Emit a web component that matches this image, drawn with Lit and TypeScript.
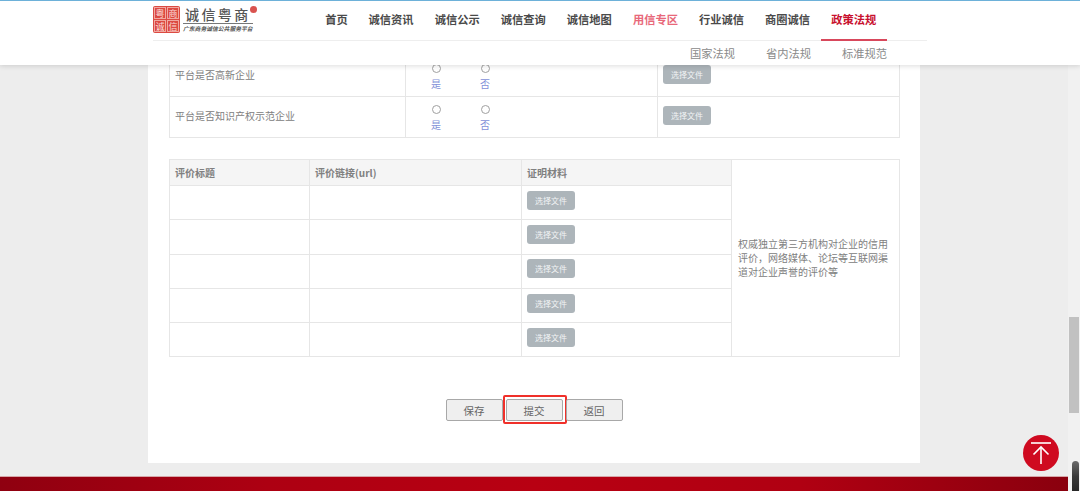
import { LitElement, html, css } from "lit";
import { customElement } from "lit/decorators.js";

const NAV = ["首页", "诚信资讯", "诚信公示", "诚信查询", "诚信地图", "用信专区", "行业诚信", "商圈诚信", "政策法规"];
const SUB = ["国家法规", "省内法规", "标准规范"];

@customElement("app-root")
export class AppRoot extends LitElement {
  static styles = css`
    :host {
      display: block;
      position: relative;
      width: 1080px;
      height: 491px;
      overflow: hidden;
      background: #ededed;
      font-family: "Noto Sans CJK SC", "Liberation Sans", sans-serif;
      color: #808080;
    }
    * { box-sizing: border-box; }
    .page { display: flex; height: 491px; }
    .scroll-area { width: 1068px; flex: none; }
    .sheet {
      width: 772px;
      height: 463px;
      margin-left: 148px;
      padding: 55px 20px 0 21px;
      background: #fff;
    }
    .gutter { width: 12px; flex: none; background: #f1f1f1; padding: 317px 1px 0; }
    .thumb { height: 96px; background: #c1c1c1; }
    .foot {
      height: 15px;
      margin-top: 13px;
      border-top: 1px solid #d6a6a8;
      background: linear-gradient(90deg, #8f0010 0%, #ad0012 25%, #b80012 50%, #b00012 75%, #8a000e 100%);
    }
    table { border-collapse: collapse; table-layout: fixed; width: 731px; font-size: 10px; }
    td, th { border: 1px solid #e6e6e6; padding: 0 5px; font-weight: 400; text-align: left; }
    .t1 tr { height: 41px; }
    .t1 td.label { padding-bottom: 3px; }
    .t2 { margin-top: 21px; }
    .t2 th { height: 26px; background: #f5f5f5; font-weight: 700; color: #808080; }
    .t2 td { height: 34.3px; }
    .t2 td.cell-file { padding-bottom: 5px; }
    .side { line-height: 14px; padding: 0 6px; font-size: 10px; background: #fff; }
    .file {
      display: flex;
      align-items: center;
      justify-content: center;
      width: 48px;
      height: 19px;
      border-radius: 3px;
      background: #adb5ba;
      color: #f2f4f5;
      font-size: 8px;
    }
    .f1 { margin-top: -3px; }
    .radios { display: flex; padding: 3px 0 0 25px; gap: 39px; margin-left: -5px; }
    .radio { display: flex; flex-direction: column; align-items: center; width: 10px; color: #7f90d8; font-size: 10px; line-height: 14px; }
    .dot { width: 9px; height: 9px; margin: 0 0 4px; border: 1px solid #a0a0a0; border-radius: 50%; background: #fff; }
    .actions { display: flex; gap: 3px; justify-content: center; padding-right: 1px; margin-top: 42px; }
    .act {
      position: relative;
      width: 57px;
      height: 22px;
      display: flex;
      align-items: center;
      justify-content: center;
      background: #efefef;
      border: 1px solid #a8a8a8;
      border-radius: 2px;
      color: #666;
      font-size: 10.5px;
    }
    .act.mark::after {
      content: "";
      position: absolute;
      inset: -5px -5px -4px -4px;
      border: 2px solid #f0302a;
      border-radius: 2px;
    }
    header {
      position: absolute;
      inset: 0 0 auto 0;
      height: 65px;
      background: #fff;
      border-top: 1px solid #6db1d9;
      box-shadow: 0 1px 5px rgba(0, 0, 0, .14);
      padding-left: 153px;
    }
    .inner { width: 774px; }
    .top { display: flex; height: 40px; border-bottom: 1px solid #eee; }
    .logo { display: flex; gap: 3px; width: 159px; padding-top: 5px; flex: none; }
    .stamp {
      display: grid;
      grid-template-columns: 1fr 1fr;
      gap: 1px;
      width: 27px;
      height: 27px;
      padding: 1px;
      background: #dc4a42;
      border-radius: 2px;
    }
    .stamp span {
      display: flex;
      align-items: center;
      justify-content: center;
      font-size: 9px;
      line-height: 1;
      color: #fbdcd8;
      border: 1px solid #f0a8a0;
    }
    .brand { position: relative; width: 70px; }
    .brand b {
      display: block;
      font-size: 14px;
      line-height: 16px;
      height: 18px;
      padding-left: 2px;
      letter-spacing: 2.4px;
      color: #555;
      font-weight: 500;
      border-bottom: 1px solid #777;
      white-space: nowrap;
    }
    .brand i {
      display: block;
      font-size: 5.8px;
      line-height: 10px;
      color: #555;
      white-space: nowrap;
      font-weight: 700;
    }
    .seal {
      position: absolute;
      right: -4px;
      top: 0;
      width: 7px;
      height: 7px;
      border-radius: 50%;
      background: #d9534f;
    }
    nav { display: flex; margin-left: 3px; }
    nav a {
      width: 66.1px;
      height: 40px;
      text-align: center;
      font-size: 11.25px;
      font-weight: 700;
      line-height: 37px;
      color: #4a4a4a;
      border-bottom: 2px solid transparent;
    }
    nav a:first-child { width: 43px; }
    nav a.hot { color: #e8687a; }
    nav a.cur { color: #c8102e; border-bottom-color: #d8485c; }
    .sub { display: flex; justify-content: flex-end; gap: 31px; padding-right: 40px; font-size: 11.25px; line-height: 24px; color: #8a8a8a; }
    .totop {
      position: absolute;
      left: 1023px;
      top: 435px;
      width: 36px;
      height: 36px;
      border-radius: 50%;
      background: #cf0a20;
      display: flex;
      align-items: center;
      justify-content: center;
    }
    .capsule {
      position: absolute;
      left: 1072px;
      top: 461px;
      width: 7px;
      height: 34px;
      border-radius: 4px;
      background: linear-gradient(#6a6a6a, #3a3a3a 45%, #222);
    }
  `;

  private file(cls: string) {
    return html`<span class="file ${cls}">选择文件</span>`;
  }

  private radios() {
    return html`<div class="radios">
      ${["是", "否"].map((t) => html`<div class="radio"><span class="dot"></span>${t}</div>`)}
    </div>`;
  }

  render() {
    return html`
      <div class="page">
        <div class="scroll-area">
          <div class="sheet">
            <table class="t1">
              <colgroup><col style="width:236px" /><col style="width:252px" /><col /></colgroup>
              <tr><td class="label">平台是否高新企业</td><td>${this.radios()}</td><td>${this.file("f1")}</td></tr>
              <tr><td class="label">平台是否知识产权示范企业</td><td>${this.radios()}</td><td>${this.file("f1")}</td></tr>
            </table>
            <table class="t2">
              <colgroup><col style="width:140px" /><col style="width:212px" /><col style="width:210px" /><col /></colgroup>
              <tr>
                <th>评价标题</th><th>评价链接(url)</th><th>证明材料</th>
                <td class="side" rowspan="6">权威独立第三方机构对企业的信用评价，网络媒体、论坛等互联网渠道对企业声誉的评价等</td>
              </tr>
              ${[0, 1, 2, 3, 4].map(() => html`<tr><td></td><td></td><td class="cell-file">${this.file("")}</td></tr>`)}
            </table>
            <div class="actions">
              <div class="act">保存</div>
              <div class="act mark">提交</div>
              <div class="act">返回</div>
            </div>
          </div>
          <div class="foot"></div>
        </div>
        <div class="gutter"><div class="thumb"></div></div>
      </div>

      <header>
        <div class="inner">
          <div class="top">
            <div class="logo">
              <div class="stamp"><span>粤</span><span>商</span><span>诚</span><span>信</span></div>
              <div class="brand">
                <b>诚信粤商</b>
                <i>广东商务诚信公共服务平台</i>
                <span class="seal"></span>
              </div>
            </div>
            <nav>
              ${NAV.map((n, i) => html`<a class="${i === 5 ? "hot" : i === 8 ? "cur" : ""}">${n}</a>`)}
            </nav>
          </div>
          <div class="sub">${SUB.map((s) => html`<span>${s}</span>`)}</div>
        </div>
      </header>

      <div class="totop">
        <svg width="22" height="24" viewBox="0 0 22 24" fill="none" stroke="#fff" stroke-width="1.6">
          <path d="M1 2h20" />
          <path d="M11 23V6" />
          <path d="M3.5 13.5 11 6l7.5 7.5" />
        </svg>
      </div>
      <div class="capsule"></div>
    `;
  }
}
